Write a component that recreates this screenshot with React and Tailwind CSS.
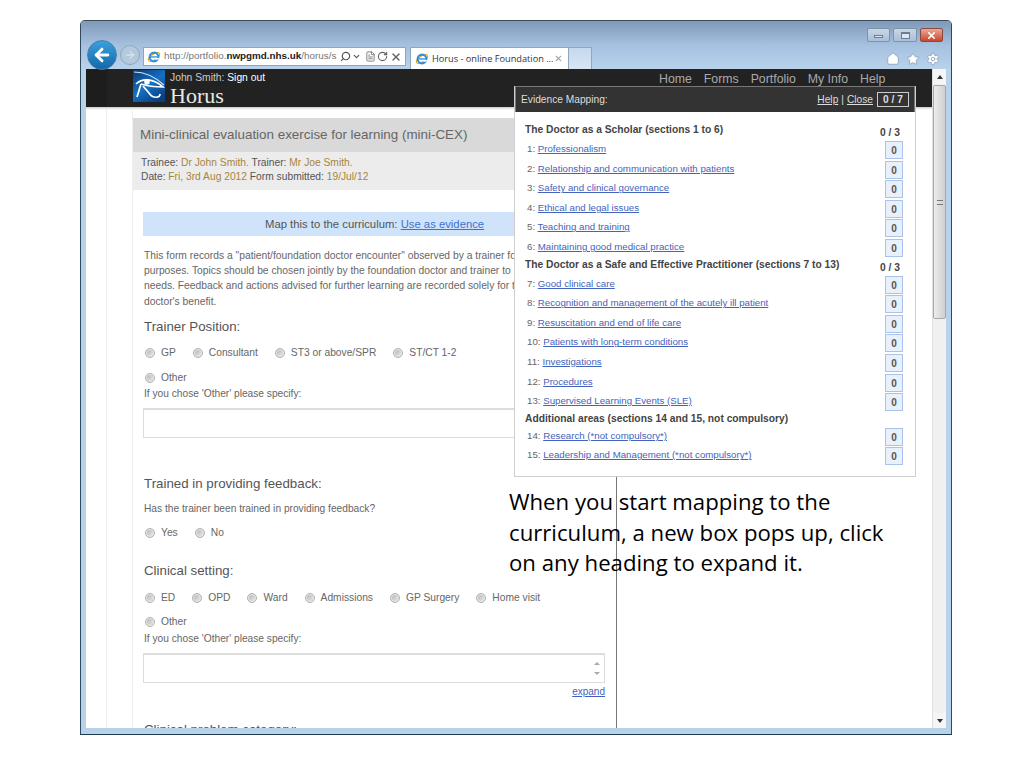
import { ArrowLeft, ArrowRight, ChevronDown, FileText, Home, RotateCw, Search, Settings, Star, X } from 'lucide-react';

const sections = [
    {
        title: 'The Doctor as a Scholar (sections 1 to 6)',
        count: '0 / 3',
        height: 'h-[17px]',
        rows: [
            ['1', 'Professionalism'],
            ['2', 'Relationship and communication with patients'],
            ['3', 'Safety and clinical governance'],
            ['4', 'Ethical and legal issues'],
            ['5', 'Teaching and training'],
            ['6', 'Maintaining good medical practice'],
        ],
    },
    {
        title: 'The Doctor as a Safe and Effective Practitioner (sections 7 to 13)',
        count: '0 / 3',
        height: 'h-[17px]',
        rows: [
            ['7', 'Good clinical care'],
            ['8', 'Recognition and management of the acutely ill patient'],
            ['9', 'Resuscitation and end of life care'],
            ['10', 'Patients with long-term conditions'],
            ['11', 'Investigations'],
            ['12', 'Procedures'],
            ['13', 'Supervised Learning Events (SLE)'],
        ],
    },
    {
        title: 'Additional areas (sections 14 and 15, not compulsory)',
        count: '',
        height: 'h-[15px]',
        rows: [
            ['14', 'Research (*not compulsory*)'],
            ['15', 'Leadership and Management (*not compulsory*)'],
        ],
    },
];

const IeLogo = ({ size = 16 }) => (
    <svg width={size} height={size} viewBox="0 0 16 16" className="shrink-0">
        <ellipse cx="8" cy="8" rx="7.4" ry="3.2" transform="rotate(-35 8 8)" fill="none" stroke="#e8a92c" strokeWidth="1.3" />
        <circle cx="8" cy="8" r="5" fill="none" stroke="#2f8fd8" strokeWidth="2.4" />
        <rect x="4" y="7.2" width="8" height="1.5" fill="#2f8fd8" />
        <rect x="9.5" y="9" width="4" height="2" fill="#ffffff" />
    </svg>
);

const HorusLogo = () => (
    <svg width="32" height="32" viewBox="0 0 32 32" className="shrink-0">
        <defs>
            <linearGradient id="horus" x1="0" y1="0" x2="0.7" y2="1">
                <stop offset="0" stopColor="#0a3a70" />
                <stop offset="0.55" stopColor="#1670c4" />
                <stop offset="1" stopColor="#0b3f80" />
            </linearGradient>
        </defs>
        <rect width="32" height="32" fill="url(#horus)" />
        <path d="M1 2 C10 2 21 6 31 15" fill="none" stroke="#cfe3f5" strokeWidth="1.2" />
        <path d="M3 14 C9 8 20 8 30 17 C21 17 14 16 8 14" fill="none" stroke="#ffffff" strokeWidth="1.7" />
        <circle cx="14" cy="12" r="2.8" fill="#ffffff" />
        <path d="M8 14 L4 27 M10 16 L16 23 C20 29 27 28 27 24" fill="none" stroke="#ffffff" strokeWidth="1.7" />
    </svg>
);

const Radio = ({ label }) => (
    <span className="flex items-center gap-[6px]">
        <span className="w-[10px] h-[10px] rounded-full border border-[#b0b0b0] bg-gradient-to-br from-[#b0b0b0] to-[#f0f0f0] shadow-[inset_0_0_0_1px_#e8e8e8]" />
        <span>{label}</span>
    </span>
);

const RadioRow = ({ labels, className = '' }) => (
    <div className={`flex gap-x-[17px] pl-[2px] ml-[10px] text-[10.25px] text-[#666] h-[14px] ${className}`}>
        {labels.map((label) => (
            <Radio key={label} label={label} />
        ))}
    </div>
);

const Section = ({ section }) => (
    <div>
        <div className={`flex justify-between text-[10.25px] font-bold text-[#444] ${section.height}`}>
            <span className="leading-[12px]">{section.title}</span>
            <span className="w-[30px] pt-[2px] leading-[13px] mr-[15px] text-right">{section.count}</span>
        </div>
        {section.rows.map(([num, name]) => (
            <div key={num} className="flex justify-between h-[19.6px] text-[9.7px] leading-[15px] text-[#666]">
                <span className="pl-[2px]">
                    {num}: <a className="text-[#4463bd] underline">{name}</a>
                </span>
                <span className="w-[18px] h-[18px] mr-[12px] border border-[#a9c3ea] bg-[#e8f0fb] text-[10px] text-[#555] font-bold text-center leading-[17px]">0</span>
            </div>
        ))}
    </div>
);

const MappingPopup = () => (
    <div className="absolute left-[428px] top-[17px] w-[402px] h-[391px] bg-white border border-[#cfcfcf] border-t-0 text-[#555]">
        <div className="flex items-center justify-between h-[26px] bg-[#333] border border-[#777] border-b-0 pl-[5px] pr-[5px] text-[10.2px] text-[#ddd]">
            <span>Evidence Mapping:</span>
            <span className="flex items-center gap-[3px]">
                <a className="underline">Help</a> | <a className="underline">Close</a>
                <span className="ml-[1px] w-[32px] h-[15px] border border-[#ccc] text-center font-bold leading-[13px]">0 / 7</span>
            </span>
        </div>
        <div className="pt-[12px] pl-[10px]">
            {sections.map((section) => (
                <Section key={section.title} section={section} />
            ))}
        </div>
    </div>
);

const Field = ({ className = '', children }) => (
    <div className={`h-[30px] ml-[10px] w-[462px] border border-[#ddd] border-t-2 bg-white ${className}`}>{children}</div>
);

const Form = () => (
    <div className="w-[484px] h-[618px] border-r border-[#777] overflow-hidden text-[#666]">
        <div className="h-[34px] mt-[8px] bg-[#d9d9d9] pl-[7px] text-[13.4px] leading-[33px] text-[#666]">
            Mini-clinical evaluation exercise for learning (mini-CEX)
        </div>
        <div className="h-[38px] bg-[#ececec] pl-[8px] pt-[4px] text-[10.25px] leading-[14px] text-[#555]">
            <div>
                Trainee: <span className="text-[#a8843c]">Dr John Smith.</span> Trainer: <span className="text-[#a8843c]">Mr Joe Smith.</span>
            </div>
            <div>
                Date: <span className="text-[#a8843c]">Fri, 3rd Aug 2012</span> Form submitted: <span className="text-[#a8843c]">19/Jul/12</span>
            </div>
        </div>
        <div className="h-[24px] mt-[22px] ml-[10px] bg-[#cfe4fb] pl-[122px] text-[11.3px] leading-[24px] text-[#555]">
            Map this to the curriculum: <a className="text-[#3f6fd0] underline">Use as evidence</a>
        </div>
        <p className="mt-[12px] ml-[11px] w-[500px] text-[10.3px] leading-[15.2px] text-[#666]">
            This form records a "patient/foundation doctor encounter" observed by a trainer for
            <br />
            purposes. Topics should be chosen jointly by the foundation doctor and trainer to
            <br />
            needs. Feedback and actions advised for further learning are recorded solely for the
            <br />
            doctor's benefit.
        </p>
        <h3 className="mt-[9px] ml-[11px] text-[13.3px] leading-[18px] text-[#555]">Trainer Position:</h3>
        <RadioRow className="mt-[10px]" labels={['GP', 'Consultant', 'ST3 or above/SPR', 'ST/CT 1-2']} />
        <RadioRow className="mt-[11px]" labels={['Other']} />
        <div className="mt-[1px] ml-[11px] text-[10.2px] leading-[15px]">If you chose 'Other' please specify:</div>
        <Field className="mt-[7px]" />
        <h3 className="mt-[37px] ml-[11px] text-[13.3px] leading-[18px] text-[#555]">Trained in providing feedback:</h3>
        <div className="mt-[8.5px] ml-[11px] text-[10.2px] leading-[15px]">Has the trainer been trained in providing feedback?</div>
        <RadioRow className="mt-[9.5px]" labels={['Yes', 'No']} />
        <h3 className="mt-[22px] ml-[11px] text-[13.3px] leading-[18px] text-[#555]">Clinical setting:</h3>
        <RadioRow className="mt-[11px]" labels={['ED', 'OPD', 'Ward', 'Admissions', 'GP Surgery', 'Home visit']} />
        <RadioRow className="mt-[10px]" labels={['Other']} />
        <div className="mt-[2.5px] ml-[11px] text-[10.2px] leading-[15px]">If you chose 'Other' please specify:</div>
        <Field className="mt-[6.5px] flex justify-end">
            <div className="w-[14px] flex flex-col justify-center items-center gap-[7px]">
                <span className="w-0 h-0 border-x-[3px] border-x-transparent border-b-[3px] border-b-[#aaa]" />
                <span className="w-0 h-0 border-x-[3px] border-x-transparent border-t-[3px] border-t-[#aaa]" />
            </div>
        </Field>
        <div className="mt-[1px] ml-[10px] w-[462px] text-right text-[10px] leading-[15px] text-[#3f5fbf] underline">expand</div>
        <h3 className="mt-[22.5px] ml-[11px] text-[13.3px] leading-[18px] text-[#555]">Clinical problem category:</h3>
    </div>
);

const Scrollbar = () => (
    <div className="w-[14px] flex flex-col bg-[#f0f0f0] border-l border-[#e0e0e0]">
        <div className="h-[15px] flex items-center justify-center bg-[#f5f5f5]">
            <span className="w-0 h-0 border-x-[3px] border-x-transparent border-b-[4px] border-b-[#333]" />
        </div>
        <div className="h-[234px] mt-[1px] bg-gradient-to-r from-[#ececec] to-[#cfcfcf] border border-[#a8a8a8] rounded-[2px] flex items-center justify-center">
            <span className="w-[6px] h-[5px] border-y border-[#777]" />
        </div>
        <div className="flex-1" />
        <div className="h-[15px] flex items-center justify-center bg-[#f5f5f5]">
            <span className="w-0 h-0 border-x-[3px] border-x-transparent border-t-[4px] border-t-[#333]" />
        </div>
    </div>
);

const WindowButtons = () => (
    <div className="flex justify-end gap-[3px] pr-[8px] pt-[7px] h-[27px]">
        <div className="w-[23px] h-[14px] rounded-[2px] border border-[#7f93a8] bg-gradient-to-b from-[#c8d8e8] to-[#a9bfd6] flex items-center justify-center">
            <span className="w-[9px] h-[3px] border border-[#6b7d90] bg-[#dfe8f0] mt-[3px]" />
        </div>
        <div className="w-[24px] h-[14px] rounded-[2px] border border-[#7f93a8] bg-gradient-to-b from-[#c8d8e8] to-[#a9bfd6] flex items-center justify-center">
            <span className="w-[9px] h-[7px] border border-[#6b7d90] border-t-2 bg-[#dfe8f0]" />
        </div>
        <div className="w-[23px] h-[14px] rounded-[2px] border border-[#8a4a3c] bg-gradient-to-b from-[#e8a896] to-[#c9432c] flex items-center justify-center">
            <X size={11} strokeWidth={3.5} className="text-white" />
        </div>
    </div>
);

const Toolbar = () => (
    <div className="flex items-end h-[21px] relative">
        <div className="relative w-[30px] h-[30px] ml-[6px] mb-[-1px] rounded-full border border-[#4a7fa8] bg-gradient-to-b from-[#3aa0dc] to-[#1468a8] flex items-center justify-center z-10">
            <ArrowLeft size={20} strokeWidth={3.5} className="text-white" />
        </div>
        <div className="w-[20px] h-[20px] ml-[3px] mb-[4px] rounded-full border border-[#8fa6bd] bg-[#b4c9de] flex items-center justify-center">
            <ArrowRight size={12} strokeWidth={2} className="text-[#e8f0f8]" />
        </div>
        <div className="flex items-center w-[263px] h-[19px] ml-[3px] mb-[3px] pl-[3px] pr-[3px] bg-white border border-[#8fa6bd] text-[9.85px] text-[#777]">
            <IeLogo size={14} />
            <span className="ml-[3px] flex-1 whitespace-nowrap overflow-hidden">
                http://portfolio.<span className="font-bold text-[#222]">nwpgmd.nhs.uk</span>/horus/s
            </span>
            <Search size={11} strokeWidth={2.5} className="text-[#555] -scale-x-100" />
            <ChevronDown size={9} strokeWidth={3} className="ml-[1px] text-[#555]" />
            <FileText size={11} className="ml-[4px] text-[#777]" />
            <RotateCw size={11} strokeWidth={2.5} className="ml-[1px] text-[#666]" />
            <X size={12} strokeWidth={3} className="ml-[2px] text-[#666]" />
        </div>
        <div className="flex items-center w-[159px] h-[22px] ml-[4px] pl-[4px] pr-[5px] bg-white border border-b-0 border-[#8fa6bd] text-[9.2px] text-[#333]" style={{ fontFamily: '"Open Sans", sans-serif' }}>
            <IeLogo size={14} />
            <span className="ml-[3px] flex-1 whitespace-nowrap">Horus - online Foundation ...</span>
            <X size={9} strokeWidth={3} className="text-[#aaa]" />
        </div>
        <div className="w-[23px] h-[22px] bg-gradient-to-b from-[#c5d8ec] to-[#d8e6f4] border border-b-0 border-l-0 border-[#8fa6bd]" />
        <div className="flex-1 flex justify-end items-center gap-[6px] pr-[11px] pb-[3px]">
            <Home size={14} fill="#ffffff" strokeWidth={1.5} className="text-[#8fa3b8]" />
            <Star size={14} fill="#ffffff" strokeWidth={1.5} className="text-[#8fa3b8]" />
            <Settings size={14} fill="#ffffff" strokeWidth={1.5} className="text-[#8fa3b8]" />
        </div>
    </div>
);

const App = () => {
    return (
        <div className="w-[1024px] h-[768px] bg-white pt-[20px] pl-[80px] overflow-hidden" style={{ fontFamily: '"Liberation Sans", sans-serif' }}>
            <div className="w-[872px] h-[715px] flex flex-col rounded-t-[5px] border border-t-[#3b4a58] border-x-[#2f4a5e] border-b-[#1f3a4a] bg-[#b9d2ec]">
                <div className="h-[48px] rounded-t-[4px] bg-gradient-to-b from-[#7f9ab8] via-[#a5c1df] to-[#b9d2ec]">
                    <WindowButtons />
                    <Toolbar />
                </div>
                <div className="flex mx-[5px] h-[659px] bg-white">
                    <div className="relative w-[846px] overflow-hidden">
                        <div className="h-[38px] flex bg-[#222] border-l-[21px] border-[#1d1d1d]">
                            <div className="ml-[26px] mt-[1px]">
                                <HorusLogo />
                            </div>
                            <div className="ml-[5px] w-[120px]">
                                <div className="text-[10.3px] leading-[14px] pt-[2px] h-[16px] text-[#ccc] whitespace-nowrap">
                                    John Smith: <span className="text-white">Sign out</span>
                                </div>
                                <div className="text-[22px] leading-[20px] mt-[1px] text-[#e8e8e8]" style={{ fontFamily: '"Liberation Serif", serif' }}>Horus</div>
                            </div>
                            <nav className="ml-[369px] flex gap-[12px] text-[12.3px] leading-[18px] pt-[1px] text-[#aaa]">
                                <span>Home</span>
                                <span>Forms</span>
                                <span>Portfolio</span>
                                <span>My Info</span>
                                <span>Help</span>
                            </nav>
                        </div>
                        <div className="h-[3px] bg-gradient-to-b from-[#ccc] to-white" />
                        <div className="flex">
                            <div className="w-[21px] border-r border-[#eee]" />
                            <div className="w-[26px] border-r border-[#eee]" />
                            <Form />
                        </div>
                        <MappingPopup />
                        <div className="absolute left-[423px] top-[418px] w-[400px] text-[22.2px] leading-[30.6px] text-black" style={{ fontFamily: '"Open Sans", sans-serif' }}>
                            When you start mapping to the
                            <br />
                            curriculum, a new box pops up, click
                            <br />
                            on any heading to expand it.
                        </div>
                    </div>
                    <Scrollbar />
                </div>
            </div>
        </div>
    );
};

export default App;
